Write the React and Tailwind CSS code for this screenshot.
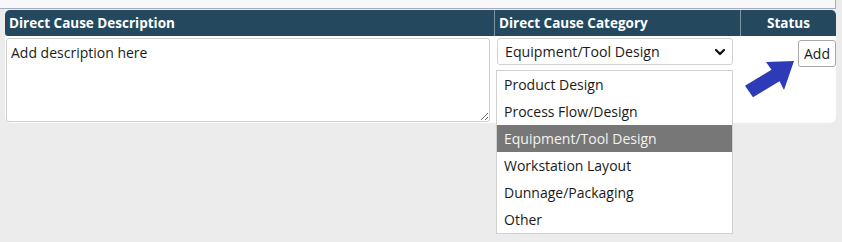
import React from "react";

const options = [
  "Product Design",
  "Process Flow/Design",
  "Equipment/Tool Design",
  "Workstation Layout",
  "Dunnage/Packaging",
  "Other",
];

export default function App() {
  return (
    <div
      className="relative w-[842px] h-[242px] bg-[#ececec] overflow-hidden text-[14px] text-[#1a1a1a]"
      style={{ fontFamily: '"Open Sans", "Noto Sans", sans-serif' }}
    >
      <div className="w-[836px] h-[9px] bg-[#f8f8fb] border-b border-r border-[#a9a9c0]" />
      <div className="ml-[5px] mt-px w-[831px] rounded-md bg-white">
        <div className="flex h-[26px] bg-[#24495e] text-white font-bold text-[13.5px] rounded-t-[5px] rounded-bl-[3px]">
          <div className="w-[490px] pl-[4px] leading-[26px] border-r border-[#7e97a5]">
            Direct Cause Description
          </div>
          <div className="w-[246px] pl-[4px] leading-[26px] border-r border-[#7e97a5]">
            Direct Cause Category
          </div>
          <div className="flex-1 text-center leading-[26px]">Status</div>
        </div>
        <div className="flex h-[87px]">
          <div className="w-[490px] pl-px pt-[2px]">
            <textarea
              defaultValue="Add description here"
              className="block w-[484px] h-[84px] border border-[#cfcfcf] rounded-[3px] px-[4px] pt-[4px] leading-[20px] text-[14px] text-[#1a1a1a] outline-none resize-y"
              style={{ fontFamily: '"Open Sans", "Noto Sans", sans-serif' }}
            />
          </div>
          <div className="w-[246px] pl-[2px] pt-[2px]">
            <div className="flex items-center justify-between w-[236px] h-[27px] border border-[#d3d3d3] rounded-[3px] pl-[7px] pr-[6px]">
              <span className="text-[14.2px]">Equipment/Tool Design</span>
              <svg width="12" height="8" viewBox="0 0 12 8">
                <path d="M2 2 L6 6 L10 2" fill="none" stroke="#111" strokeWidth="2.2" strokeLinecap="round" strokeLinejoin="round" />
              </svg>
            </div>
          </div>
          <div className="flex-1 flex justify-end items-start pt-[4px]">
            <div className="w-[38px] h-[27px] border border-[#a8a8a8] rounded-[3px] bg-white flex items-center justify-center leading-none">
              Add
            </div>
          </div>
        </div>
      </div>

      <div className="absolute left-[496px] top-[70px] w-[237px] border border-[#d0d0d0] bg-white">
        {options.map((o) => (
          <div
            key={o}
            className={
              o === "Equipment/Tool Design"
                ? "h-[27px] leading-[27px] pl-[7px] bg-[#777777] text-[#f2f2f2]"
                : "h-[27px] leading-[27px] pl-[7px] text-[#1a1a1a]"
            }
          >
            {o}
          </div>
        ))}
      </div>

      <svg className="absolute left-[740px] top-[55px]" width="60" height="50" viewBox="0 0 60 50">
        <polygon
          points="5,30.7 31.5,14.7 26,7 54,6 44,35 39.5,26.3 13,42.3"
          fill="#2d3bb8"
        />
      </svg>
    </div>
  );
}
